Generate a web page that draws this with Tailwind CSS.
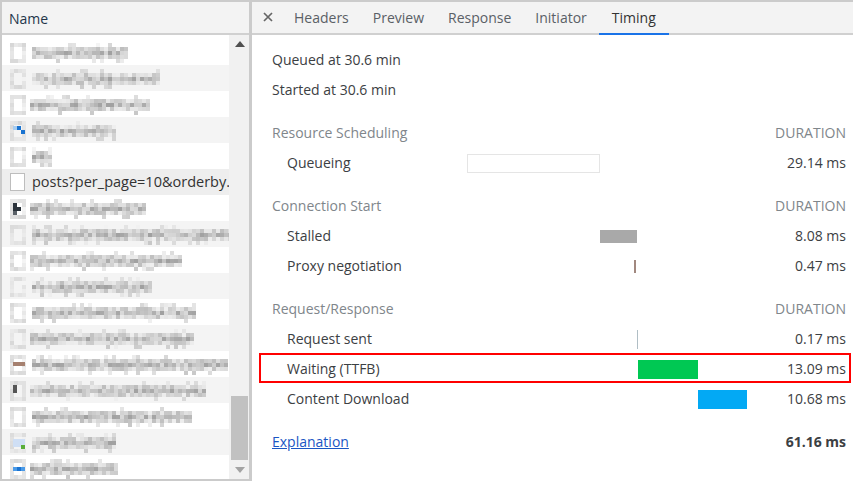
<!DOCTYPE html>
<html lang="en">
<head>
  <meta charset="UTF-8">
  <title>Timing</title>
  <script src="https://cdn.jsdelivr.net/npm/@tailwindcss/browser@4"></script>
</head>
<body class="bg-white overflow-hidden">
<div class="flex h-[482px] w-[853px] font-['Open_Sans',sans-serif] text-[14px] text-[#3c4043]">

  <!-- Name column -->
  <div class="w-[252px] shrink-0 h-[481px] flex flex-col border-[#cbcbcb] border-t-[2px] border-l-[2px] border-r-[3px] border-b-[2px] ml-0">
    <div class="h-[33px] shrink-0 bg-[#f3f3f3] border-b-2 border-[#d0d0d0] pl-[7px] pt-[1px] flex items-center text-[#24364a]">Name</div>
    <div class="flex flex-1 min-h-0 pt-[4px]">
      <div id="rows" class="w-[227px] shrink-0 overflow-hidden"></div>
      <!-- Scrollbar -->
      <div class="flex-1 bg-[#f1f1f1] flex flex-col items-center pl-[2px] pr-px -mt-[4px] pt-[4px]">
        <svg class="mt-[2px]" width="10" height="6" viewBox="0 0 10 6"><path d="M5 0l5 6H0z" fill="#505050"/></svg>
        <div class="w-full bg-[#c1c1c1] h-[64px] mt-[349px]"></div>
        <svg class="mt-[7px]" width="10" height="6" viewBox="0 0 10 6"><path d="M0 0h10L5 6z" fill="#a3a3a3"/></svg>
      </div>
    </div>
  </div>

  <!-- Timing panel -->
  <div class="flex-1 min-w-0 flex flex-col">
    <div class="h-[35px] shrink-0 bg-[#f3f3f3] border-t-[2px] border-b-2 border-t-[#cbcbcb] border-b-[#d0d0d0] flex items-end text-[#5a6066]">
      <svg class="ml-[11px] mb-[11px] mr-[14px]" width="10" height="10" viewBox="0 0 10 10"><path d="M1 1l8 8M9 1l-8 8" stroke="#666" stroke-width="1.7"/></svg>
      <div class="h-[31px] px-[7px] flex items-center">Headers</div>
      <div class="h-[31px] ml-[10px] px-[7px] flex items-center">Preview</div>
      <div class="h-[31px] ml-[10px] px-[7px] flex items-center">Response</div>
      <div class="h-[31px] ml-[10px] px-[7px] flex items-center">Initiator</div>
      <div class="h-[33px] ml-[5px] w-[70px] justify-center flex items-center text-[#333] border-b-2 border-[#1a73e8] -mb-[2px]">Timing</div>
    </div>

    <div class="pl-[20px] pr-[7px] pt-[9px]">
      <div class="h-[30px] flex items-center">Queued at 30.6 min</div>
      <div class="h-[30px] flex items-center">Started at 30.6 min</div>

      <div class="h-[30px] mt-[13px] flex items-center justify-between text-[#80868b]"><span>Resource Scheduling</span><span>DURATION</span></div>
      <div class="h-[30px] flex items-center">
        <span class="w-[195px] pl-[15px] shrink-0">Queueing</span>
        <div class="w-[133px] h-[19px] mt-[2px] border border-[#e5e5e5]"></div>
        <span class="ml-auto">29.14 ms</span>
      </div>

      <div class="h-[30px] mt-[13px] flex items-center justify-between text-[#80868b]"><span>Connection Start</span><span>DURATION</span></div>
      <div class="h-[30px] flex items-center">
        <span class="w-[195px] pl-[15px] shrink-0">Stalled</span>
        <div class="ml-[133px] w-[37px] h-[13px] mt-[2px] bg-[#a9a9a9]"></div>
        <span class="ml-auto">8.08 ms</span>
      </div>
      <div class="h-[30px] flex items-center">
        <span class="w-[195px] pl-[15px] shrink-0">Proxy negotiation</span>
        <div class="ml-[167px] w-[2px] h-[13px] mt-[2px] bg-[#a1887f]"></div>
        <span class="ml-auto">0.47 ms</span>
      </div>

      <div class="h-[30px] mt-[13px] flex items-center justify-between text-[#80868b]"><span>Request/Response</span><span>DURATION</span></div>
      <div class="h-[30px] flex items-center">
        <span class="w-[195px] pl-[15px] shrink-0">Request sent</span>
        <div class="ml-[170px] w-px h-[19px] mt-[2px] bg-[#b0bec5]"></div>
        <span class="ml-auto">0.17 ms</span>
      </div>
      <div class="relative h-[30px] flex items-center">
        <div class="absolute left-[-13px] right-[-5px] top-0 h-[30px] border-2 border-[#f00]"></div>
        <span class="w-[195px] pl-[15px] shrink-0">Waiting (TTFB)</span>
        <div class="ml-[171px] w-[60px] h-[19px] mt-[2px] bg-[#00c853]"></div>
        <span class="ml-auto">13.09 ms</span>
      </div>
      <div class="h-[30px] flex items-center">
        <span class="w-[195px] pl-[15px] shrink-0">Content Download</span>
        <div class="ml-[231px] w-[49px] h-[19px] mt-[2px] bg-[#03a9f4]"></div>
        <span class="ml-auto">10.68 ms</span>
      </div>

      <div class="h-[30px] mt-[13px] flex items-center justify-between">
        <a href="#" class="text-[#1a56c4] underline">Explanation</a>
        <span class="font-bold">61.16 ms</span>
      </div>
    </div>
  </div>
</div>

<script>
// name column: the file names are pixelated out in the screenshot, so draw them as mosaics
// [text width, text x, icon blocks as x,y,w,h,colour]
var list = [
  [96, 32], [128, 32], [118, 30], [84, 32, [[13, 9, 4, 4, '#a8cdf0'], [17, 9, 4, 4, '#1a73d0'], [21, 13, 4, 4, '#1a73d0']]], [20, 32],
  null,
  [115, 30, [[13, 8, 4, 4, '#2b333b'], [13, 12, 8, 4, '#2b333b'], [13, 16, 4, 4, '#5a6168']]], [197, 32], [150, 30], [120, 32], [164, 32],
  [162, 30], [193, 32, [[13, 11, 12, 4, '#a5806f']]], [175, 30, [[13, 8, 4, 8, '#555555']]], [160, 32],
  [83, 32, [[13, 10, 12, 8, '#cfdff5'], [21, 16, 4, 4, '#5aae3a']]], [86, 30, [[13, 12, 12, 4, '#4a9ae8'], [17, 12, 4, 4, '#1a73d0']]]
];
var seed = 7;
function rnd() { seed = (seed * 16807) % 2147483647; return seed / 2147483647; }
function cell(x, y, v) {
  return '<rect x="' + x + '" y="' + y + '" width="4" height="4" fill="rgb(' + v + ',' + v + ',' + v + ')"/>';
}
var rows = document.getElementById('rows');
list.forEach(function (r, i) {
  var row = document.createElement('div');
  row.style.height = '26px';
  var bg = i == 5 ? '#eeeeee' : (i % 2 ? '#f4f4f4' : '#ffffff');
  row.style.background = bg;
  if (r == null) {
    row.style.display = 'flex';
    row.style.alignItems = 'center';
    row.innerHTML = '<span style="width:15px;height:18px;margin:0 7px 0 8px;border:1px solid #bdbdbd;background:#fff;flex:none"></span><span style="white-space:nowrap;overflow:hidden;color:#333;font-size:14.5px">posts?per_page=10&amp;orderby.</span>';
  } else {
    var s = '';
    var y, x;
    for (x = 0; x < r[0]; x += 4) {
      var cx = r[1] - 2 + x;
      s += cell(cx, 8, 190 + Math.floor(rnd() * 50));
      s += cell(cx, 12, 160 + Math.floor(rnd() * 60));
      s += cell(cx, 16, 190 + Math.floor(rnd() * 50));
      if (rnd() < 0.2) s += cell(cx, 4, 215 + Math.floor(rnd() * 30));
      if (rnd() < 0.2) s += cell(cx, 20, 200 + Math.floor(rnd() * 40));
    }
    // page icon, pixelated too
    for (y = 4; y < 20; y += 4) {
      s += cell(8, y, 215 + Math.floor(rnd() * 20));
      s += cell(20, y, 225 + Math.floor(rnd() * 20));
    }
    for (x = 8; x < 24; x += 4) {
      s += cell(x, 4, 215 + Math.floor(rnd() * 20));
      s += cell(x, 20, 215 + Math.floor(rnd() * 20));
    }
    (r[2] || []).forEach(function (b) {
      s += '<rect x="' + (b[0] - 2) + '" y="' + b[1] + '" width="' + b[2] + '" height="' + b[3] + '" fill="' + b[4] + '"/>';
    });
    row.innerHTML = '<svg width="227" height="26" style="display:block">' + s + '</svg>';
  }
  rows.appendChild(row);
});
</script>
</body>
</html>
